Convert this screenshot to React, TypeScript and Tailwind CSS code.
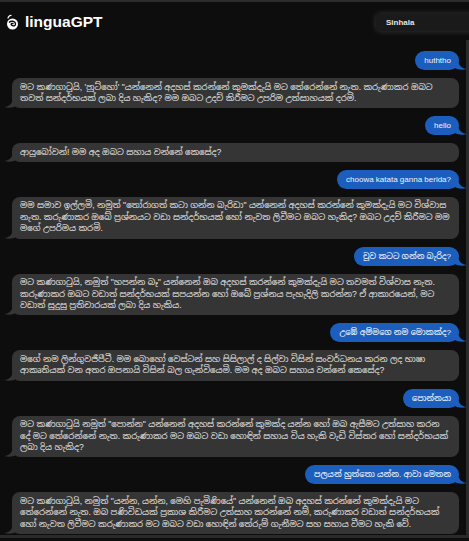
import React from "react"

type Msg = { from: "user" | "bot"; text: string }

const messages: Msg[] = [
  { from: "user", text: "huththo" },
  {
    from: "bot",
    text: "මට කණගාටුයි, 'හුට්හෝ' \"යන්නෙන් අදහස් කරන්නේ කුමක්දැයි මට තේරෙන්නේ නැත. කරුණාකර ඔබට තවත් සන්දර්භයක් ලබා දිය හැකිද? මම ඔබට උදව් කිරීමට උපරිම උත්සාහයක් දරමි.",
  },
  { from: "user", text: "hello" },
  { from: "bot", text: "ආයුබෝවන්! මම අද ඔබට සහාය වන්නේ කෙසේද?" },
  { from: "user", text: "choowa katata ganna berida?" },
  {
    from: "bot",
    text: "මම සමාව ඉල්ලමි, නමුත් \"තෝරාගත් කටා ගන්න බැරිඩා\" යන්නෙන් අදහස් කරන්නේ කුමක්දැයි මට විශ්වාස නැත. කරුණාකර ඔබේ ප්‍රශ්නයට වඩා සන්දර්භයක් හෝ නැවත ලිවීමට ඔබට හැකිද? ඔබට උදව් කිරීමට මම මගේ උපරිමය කරමි.",
  },
  { from: "user", text: "චූව කටට ගන්න බැරිද?" },
  {
    from: "bot",
    text: "මට කණගාටුයි, නමුත් \"හපන්න බෑ\" යන්නෙන් ඔබ අදහස් කරන්නේ කුමක්දැයි මට තවමත් විශ්වාස නැත. කරුණාකර ඔබට වඩාත් සන්දර්භයක් සපයන්න හෝ ඔබේ ප්‍රශ්නය පැහැදිලි කරන්න? ඒ ආකාරයෙන්, මට වඩාත් සුදුසු ප්‍රතිචාරයක් ලබා දිය හැකිය.",
  },
  { from: "user", text: "උඹේ අම්මගෙ නම මොකක්ද?" },
  {
    from: "bot",
    text: "මගේ නම ලින්ගුවජීපීටී. මම බොහෝ වෙස්ටන් සහ සිසිලාල් ද සිල්වා විසින් සංවර්ධනය කරන ලද භාෂා ආකෘතියක් වන අතර ඔපනායි විසින් බල ගැන්වියෙමි. මම අද ඔබට සහාය වන්නේ කෙසේද?",
  },
  { from: "user", text: "පොන්නයා" },
  {
    from: "bot",
    text: "මට කණගාටුයි නමුත් \"පොන්න\" යන්නෙන් අදහස් කරන්නේ කුමක්ද යන්න හෝ ඔබ ඇසීමට උත්සාහ කරන දේ මට තේරෙන්නේ නැත. කරුණාකර මට ඔබට වඩා හොඳින් සහාය විය හැකි වැඩි විස්තර හෝ සන්දර්භයක් ලබා දිය හැකිද?",
  },
  { from: "user", text: "පලයන් හුත්තො යන්න. ආවා මෙතන" },
  {
    from: "bot",
    text: "මට කණගාටුයි, නමුත් \"යන්න, යන්න, මෙහි පැමිණියේ\" යන්නෙන් ඔබ අදහස් කරන්නේ කුමක්දැයි මට තේරෙන්නේ නැත. ඔබ පණිවිඩයක් ප්‍රකාශ කිරීමට උත්සාහ කරන්නේ නම්, කරුණාකර වඩාත් සන්දර්භයක් හෝ නැවත ලිවීමට කරුණාකර මට ඔබට වඩා හොඳින් තේරුම් ගැනීමට සහ සහාය වීමට හැකි වේ.",
  },
]

function Logo() {
  return (
    <svg width="13" height="16" viewBox="0 0 13 16" className="shrink-0">
      <path d="M2 4.5 A3 3 0 0 1 5.5 1.5" stroke="#fff" strokeWidth="1.2" fill="none" />
      <circle cx="6.5" cy="10" r="5.5" fill="#fff" />
      <path d="M3 8.5 C5 6.5 9 7 9.5 9.5 C10 12 7 12.5 5.5 11 C4.5 10 6 8.8 7.5 9.8" stroke="#0d0d0d" strokeWidth="1.4" fill="none" />
    </svg>
  )
}

function UserBubble({ text }: { text: string }) {
  return (
    <div className="flex justify-end">
      <div className="relative">
        <div className="rounded-[10px] bg-[#1c5ebd] pl-[9px] pr-[8px] py-[4px] text-[8px] leading-[11px] font-medium text-[#eef2f8]">
          {text}
        </div>
        <svg width="12" height="9" viewBox="0 0 12 9" className="absolute -right-[8px] bottom-0">
          <path d="M0 0 L3 0 C4 5 7 7.5 12 8 C8 9 3 9 0 7 Z" fill="#1c5ebd" />
        </svg>
      </div>
    </div>
  )
}

function BotBubble({ text }: { text: string }) {
  return (
    <div className="relative">
      <div className="rounded-[8px] bg-[#353535] px-[8px] py-[3.5px] text-[8.6px] leading-[11.6px] text-[#e6e6e6]">
        {text}
      </div>
      <svg width="12" height="9" viewBox="0 0 12 9" className="absolute -left-[8px] bottom-0">
        <path d="M12 0 L9 0 C8 5 5 7.5 0 8 C4 9 9 9 12 7 Z" fill="#353535" />
      </svg>
    </div>
  )
}

export default function App() {
  return (
    <div
      className="h-screen overflow-hidden bg-[#0d0d0d] border-t-2 border-[#2c2c2c]"
      style={{ fontFamily: '"Liberation Sans", Arial, "Noto Sans Sinhala", sans-serif' }}
    >
      <header className="flex items-center justify-between h-[38px] pl-[6px]">
        <div className="flex items-center gap-[6px] pt-[2px]">
          <Logo />
          <span className="text-[15.5px] font-bold text-white">linguaGPT</span>
        </div>
        <div className="w-[106px] -mr-[13px] h-[17px] mt-[3px] rounded-[4px] bg-[#1a1a1a] shadow-[0_0_6px_rgba(255,255,255,0.18)] flex items-center pl-[10px]">
          <span className="text-[8px] font-bold text-[#e4e4e4]">Sinhala</span>
        </div>
      </header>
      <div className="h-[498px] border-r-[3px] border-b-[3px] border-[#2a2a2a] pl-[12px] pr-[7px] pt-[11px] flex flex-col gap-[8px]">
        {messages.map((m, i) =>
          m.from === "user" ? <UserBubble key={i} text={m.text} /> : <BotBubble key={i} text={m.text} />
        )}
      </div>
    </div>
  )
}
